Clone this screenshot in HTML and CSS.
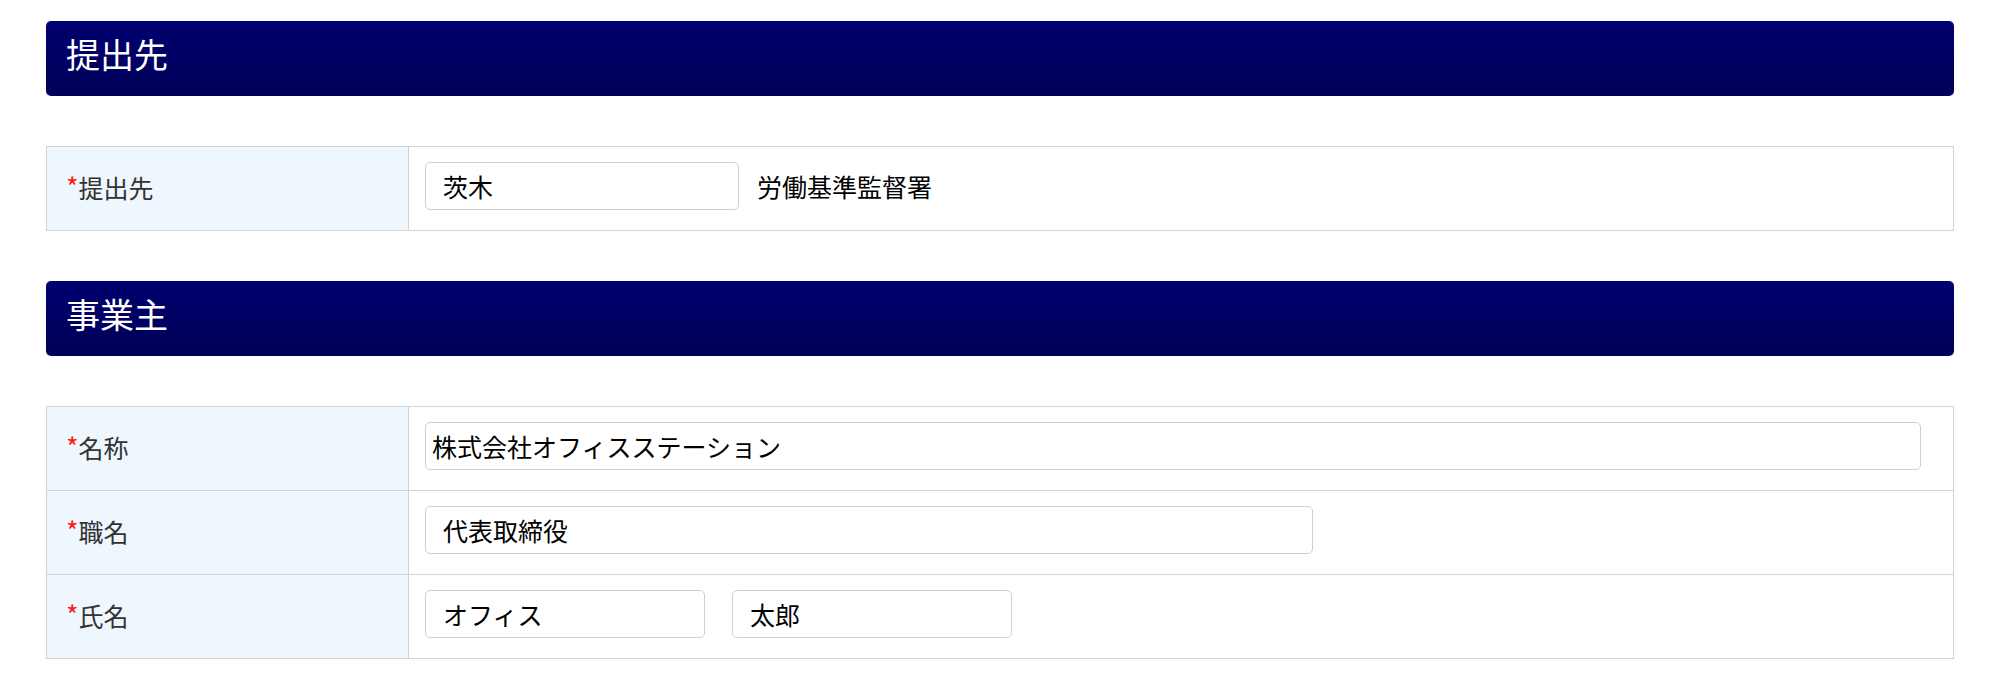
FILE: index.html
```html
<!DOCTYPE html>
<html lang="ja">
<head>
    <meta charset="UTF-8">
    <title>提出先・事業主</title>
    <link rel="stylesheet" href="styles.css">
</head>
<body>
    <div class="page">

        <section class="block">
            <h2 class="block-title">提出先</h2>
            <table class="form-table">
                <tr>
                    <th><span class="req">*</span>提出先</th>
                    <td>
                        <div class="field-row">
                            <input type="text" class="txt w-office" value="茨木">
                            <span class="suffix">労働基準監督署</span>
                        </div>
                    </td>
                </tr>
            </table>
        </section>

        <section class="block">
            <h2 class="block-title">事業主</h2>
            <table class="form-table">
                <tr>
                    <th><span class="req">*</span>名称</th>
                    <td>
                        <input type="text" class="txt txt-tight w-full" value="株式会社オフィスステーション">
                    </td>
                </tr>
                <tr>
                    <th><span class="req">*</span>職名</th>
                    <td>
                        <input type="text" class="txt w-title" value="代表取締役">
                    </td>
                </tr>
                <tr>
                    <th><span class="req">*</span>氏名</th>
                    <td>
                        <div class="field-row name-row">
                            <input type="text" class="txt w-name" value="オフィス">
                            <input type="text" class="txt w-name" value="太郎">
                        </div>
                    </td>
                </tr>
            </table>
        </section>

    </div>
</body>
</html>
```

FILE: styles.css
```css
body {
    margin: 0;
    background-color: #ffffff;
    font-family: "Noto Sans CJK JP", "Noto Sans", sans-serif;
    color: #333;
}
.page {
    padding: 21px 46px 0;
}
.block {
    margin-bottom: 50px;
}
.block-title {
    margin: 0;
    height: 75px;
    box-sizing: border-box;
    padding: 0 20px 10px;
    display: flex;
    align-items: center;
    border-radius: 5px;
    background: linear-gradient(#000070, #000058);
    color: #fff;
    font-size: 34px;
    font-weight: normal;
}
.form-table {
    width: 100%;
    margin-top: 50px;
    border-collapse: collapse;
    table-layout: fixed;
}
.form-table th,
.form-table td {
    border: 1px solid #d2d2d2;
    padding: 15px 16px 20px;
    vertical-align: middle;
    font-size: 25px;
    font-weight: normal;
}
.form-table th {
    width: 326px;
    padding-left: 19px;
    text-align: left;
    background-color: #eef6fe;
    color: #333;
}
.form-table td {
    background-color: #fff;
    color: #000;
}
.req {
    color: #ff1a1a;
    font-size: 27px;
}
.field-row {
    display: flex;
    align-items: center;
    gap: 18px;
}
.name-row {
    gap: 27px;
}
.txt {
    display: block;
    box-sizing: border-box;
    height: 48px;
    padding: 0 17px;
    border: 1px solid #cfcfcf;
    border-radius: 5px;
    background: #fff;
    font: inherit;
    color: #000;
    outline: none;
}
.txt-tight {
    padding: 0 6px;
}
.w-office { width: 314px; }
.w-title { width: 888px; }
.w-name { width: 280px; }
.w-full { width: calc(100% - 16px); }
.suffix {
    color: #000;
}
```
